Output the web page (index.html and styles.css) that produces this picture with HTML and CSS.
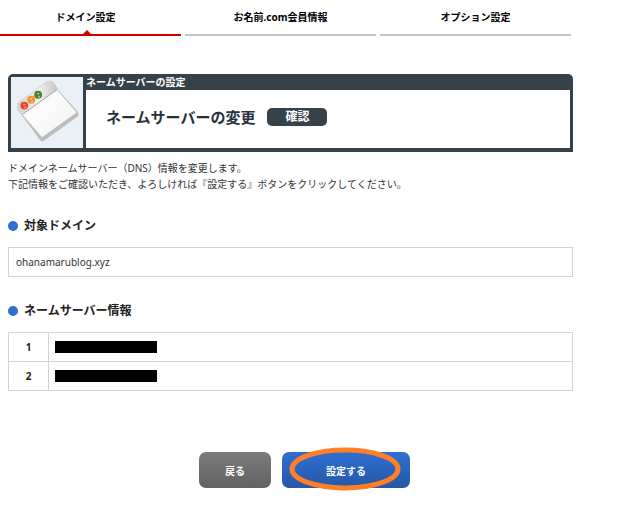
FILE: index.html
```
<!DOCTYPE html>
<html lang="ja">
<head>
    <meta charset="UTF-8">
    <meta name="viewport" content="width=device-width, initial-scale=1.0">
    <title>ネームサーバーの変更</title>
    <link rel="stylesheet" href="styles.css">
</head>
<body>

    <div class="page">
        <nav class="tabs">
            <a href="#domain" class="tab active">ドメイン設定</a>
            <a href="#member" class="tab">お名前.com会員情報</a>
            <a href="#option" class="tab">オプション設定</a>
        </nav>

        <main class="content">
            <!-- タイトルパネル -->
            <header class="panel">
                <div class="panel-icon">
                    <svg viewBox="0 0 72 72" aria-hidden="true">
                        <defs>
                            <linearGradient id="paper" x1="0" y1="0" x2="1" y2="1">
                                <stop offset="0" stop-color="#f0f0f0"/>
                                <stop offset="0.4" stop-color="#fcfcfc"/>
                                <stop offset="1" stop-color="#f0f0f0"/>
                            </linearGradient>
                            <linearGradient id="bar" x1="0" y1="0" x2="1" y2="0">
                                <stop offset="0" stop-color="#d2d2d2"/>
                                <stop offset="0.5" stop-color="#f2f2f2"/>
                                <stop offset="1" stop-color="#c4c4c4"/>
                            </linearGradient>
                        </defs>
                        <path d="M10 38 L29 64 Q31 67 34 64 L67 40 Q69 38 67 35 L46 12 Z" fill="#bcbcbc"/>
                        <path d="M6 29 Q6 27 8 25 L36 5 Q40 3 42 5 L47 12 L11 38 Q5 35 6 29 Z" fill="url(#bar)" stroke="#d0d0d0"/>
                        <path d="M11 38 L46 13 L66 36 L31 61 Z" fill="url(#paper)"/>
                        <path d="M11 38 L46 13" stroke="#a8a8a8" fill="none"/>
                        <circle cx="13" cy="29" r="4" fill="#e5482a"/>
                        <circle cx="20" cy="23" r="4" fill="#f2912e"/>
                        <circle cx="27" cy="18" r="4" fill="#55802b"/>
                        <g fill="#fff" opacity="0.55">
                            <circle cx="13" cy="28" r="1"/>
                            <circle cx="14" cy="31" r="1"/>
                            <circle cx="20" cy="22" r="1"/>
                            <circle cx="21" cy="25" r="1"/>
                            <circle cx="27" cy="17" r="1"/>
                            <circle cx="28" cy="20" r="1"/>
                        </g>
                    </svg>
                </div>
                <div class="panel-main">
                    <p class="panel-category">ネームサーバーの設定</p>
                    <div class="panel-body">
                        <h1>ネームサーバーの変更</h1>
                        <span class="step">確認</span>
                    </div>
                </div>
            </header>

            <p class="lead">
                ドメインネームサーバー（DNS）情報を変更します。<br>
                下記情報をご確認いただき、よろしければ『設定する』ボタンをクリックしてください。
            </p>

            <h2>対象ドメイン</h2>
            <div class="domain-box">ohanamarublog.xyz</div>

            <h2>ネームサーバー情報</h2>
            <table class="servers">
                <tr>
                    <th scope="row">1</th>
                    <td><div class="masked"></div></td>
                </tr>
                <tr>
                    <th scope="row">2</th>
                    <td><div class="masked"></div></td>
                </tr>
            </table>

            <div class="actions">
                <button type="button" class="btn btn-back">戻る</button>
                <button type="button" class="btn btn-submit">設定する
                    <svg class="mark" viewBox="0 0 112 44" aria-hidden="true">
                        <ellipse cx="56" cy="22" rx="53" ry="19" fill="none" stroke="#ff7f27" stroke-width="5"/>
                    </svg>
                </button>
            </div>
        </main>
    </div>

</body>
</html>
```
FILE: styles.css
```
* {
    box-sizing: border-box;
}
body {
    margin: 0;
    background: #fff;
    color: #333;
    font-family: "Noto Sans", "Noto Sans CJK JP", sans-serif;
    font-size: 10px;
    line-height: 16px;
    overflow-x: hidden;
}
h1, h2, p {
    margin: 0;
}
.page {
    padding-right: 67px;
}

/* タブ */
.tabs {
    display: grid;
    grid-template-columns: repeat(3, 1fr);
    gap: 4px;
    margin-left: -10px;
    margin-right: 2px;
}
.tab {
    position: relative;
    padding: 9px 0;
    border-bottom: 2px solid #c4c4c4;
    color: #000;
    font-weight: bold;
    text-align: center;
    text-decoration: none;
}
.tab.active {
    border-bottom-color: #c00;
}
.tab.active::after {
    content: "";
    position: absolute;
    bottom: 0;
    left: 50%;
    margin-left: -3px;
    border: 4px solid transparent;
    border-top: 0;
    border-bottom-color: #c00;
}

.content {
    padding: 38px 0 0 8px;
}

/* タイトルパネル */
.panel {
    display: flex;
    gap: 3px;
    padding: 0 3px 4px;
    background: #36424a;
    border-radius: 5px 5px 0 0;
}
.panel-icon {
    width: 72px;
    height: 71px;
    margin-top: 3px;
    background: #ebeff6;
}
.panel-icon svg {
    display: block;
    width: 100%;
    height: 100%;
}
.panel-main {
    flex: 1;
    display: flex;
    flex-direction: column;
}
.panel-category {
    color: #fff;
    font-weight: bold;
}
.panel-body {
    flex: 1;
    display: flex;
    align-items: center;
    gap: 12px;
    padding: 0 20px 4px;
    background: #fff;
}
h1 {
    color: #28323c;
    font-size: 15px;
    line-height: 20px;
}
.step {
    padding: 0 18px;
    border-radius: 5px;
    background: #36424a;
    color: #fff;
    font-size: 12px;
    font-weight: bold;
    line-height: 18px;
}

.lead {
    margin-top: 8px;
}

/* 見出し */
h2 {
    display: flex;
    align-items: center;
    gap: 6px;
    margin: 24px 0 11px;
    color: #222;
    font-size: 12px;
    line-height: 20px;
}
h2::before {
    content: "";
    width: 10px;
    height: 10px;
    border-radius: 50%;
    background: #2f6fd0;
}
.domain-box {
    padding: 6px 7px;
    border: 1px solid #d3d3d3;
}

/* ネームサーバー一覧 */
.servers {
    width: 100%;
    border-collapse: collapse;
}
.servers th,
.servers td {
    height: 29px;
    padding: 0 6px;
    border: 1px solid #d3d3d3;
}
.servers th {
    width: 40px;
    color: #222;
}
.masked {
    width: 102px;
    height: 12px;
    background: #000;
}

/* ボタン */
.actions {
    display: flex;
    justify-content: center;
    gap: 11px;
    margin: 61px 0 40px;
    padding-left: 28px;
}
.btn {
    height: 36px;
    padding: 0;
    border: 0;
    border-radius: 7px;
    color: #fff;
    font-family: inherit;
    font-size: 10px;
    font-weight: bold;
    cursor: pointer;
}
.btn-back {
    width: 72px;
    background: linear-gradient(#7c7c7c, #626262);
}
.btn-submit {
    position: relative;
    width: 128px;
    background: linear-gradient(#2e6fd4, #2558a5);
}
.mark {
    position: absolute;
    top: -5px;
    left: 7px;
    width: 112px;
    height: 44px;
}
```
